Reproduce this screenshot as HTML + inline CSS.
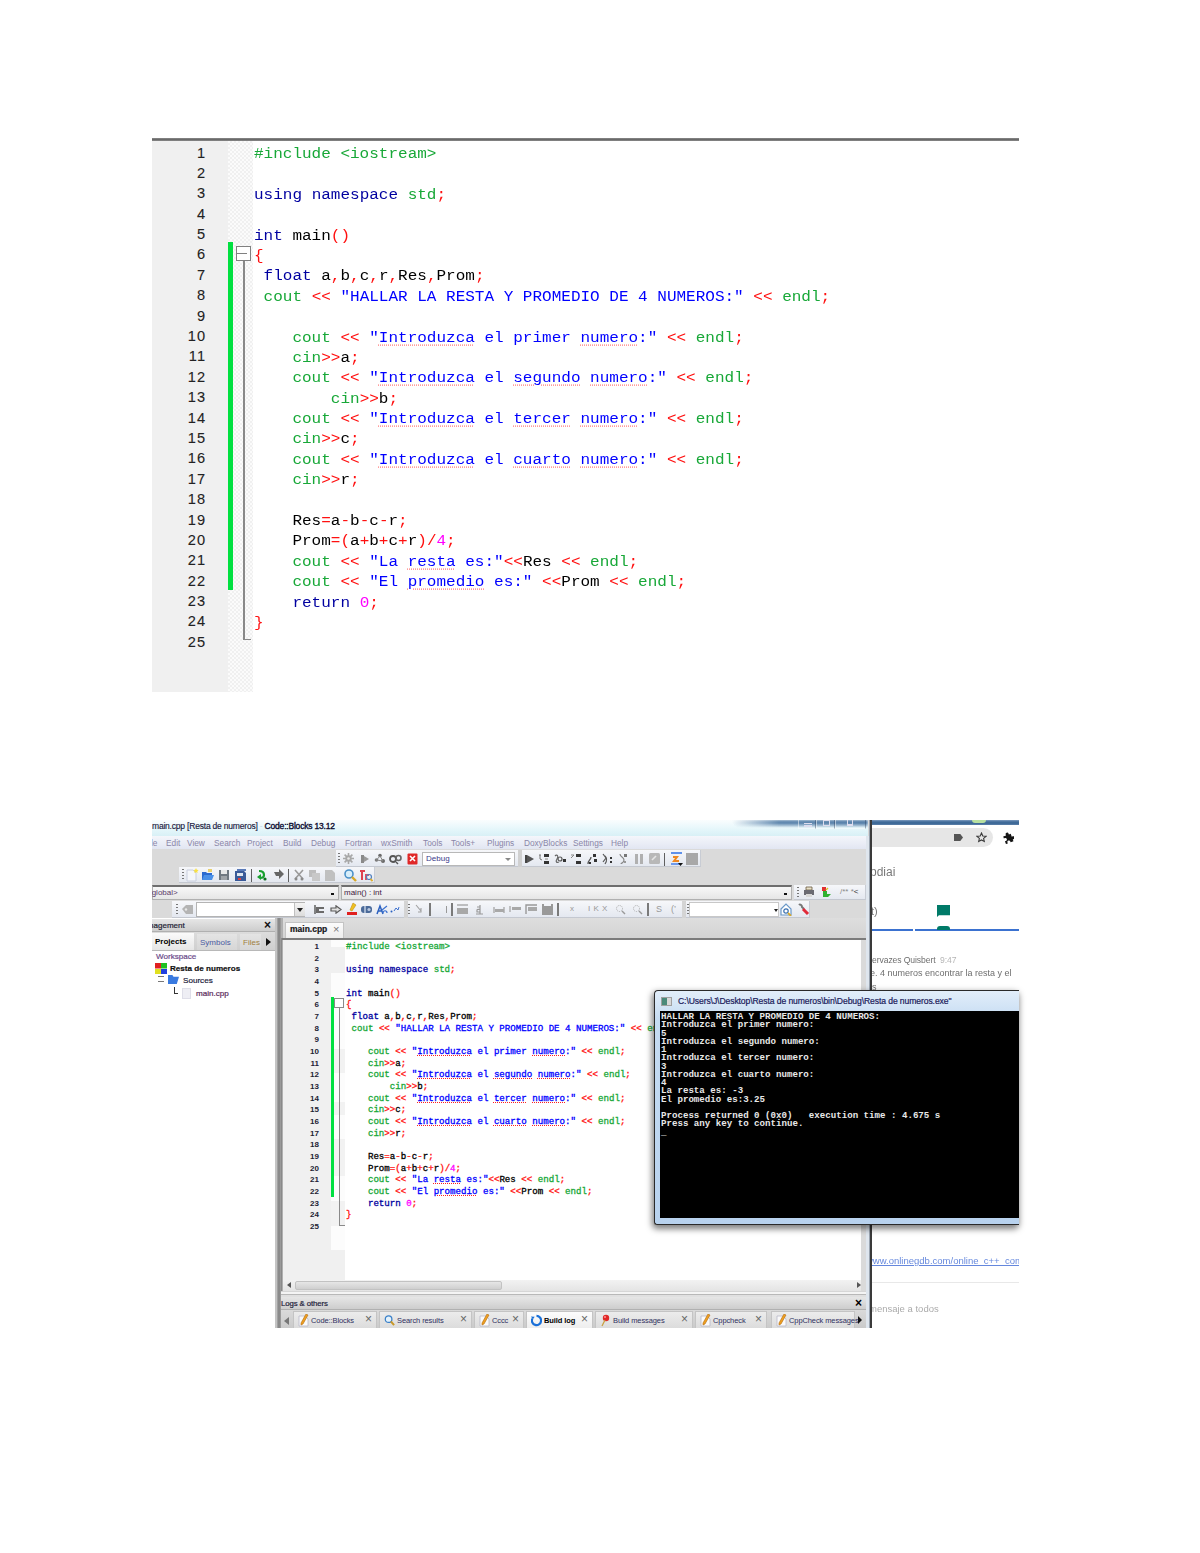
<!DOCTYPE html>
<html><head><meta charset="utf-8">
<style>
*{margin:0;padding:0;box-sizing:border-box}
html,body{width:1200px;height:1553px;background:#fff;overflow:hidden}
body{position:relative;font-family:"Liberation Sans",sans-serif}
.a{position:absolute}
i,em,b{font-style:normal}
/* ===== screenshot 1 ===== */
#s1top{left:152px;top:138px;width:867px;height:3px;background:linear-gradient(#8a8a8a,#6a6a6a 50%,#8a8a8a)}
#s1gut{left:152px;top:141px;width:76px;height:551px;background:#f0f0f0}
#s1mar{left:228px;top:141px;width:25px;height:551px;background-color:#fbfbfb;
 background-image:linear-gradient(45deg,#f0f0f0 25%,transparent 25%,transparent 75%,#f0f0f0 75%),linear-gradient(45deg,#f0f0f0 25%,transparent 25%,transparent 75%,#f0f0f0 75%);
 background-size:4px 4px;background-position:0 0,2px 2px}
#s1green{left:228px;top:242px;width:5px;height:348px;background:#00e040}
#s1fold{left:236px;top:246px;width:15px;height:15px;border:1.5px solid #808080;background:#fff}
#s1fold:after{content:"";position:absolute;left:0;top:5.5px;width:10px;height:1.5px;background:#808080}
#s1fl{left:243px;top:261px;width:1.5px;height:379px;background:#888}
#s1ft{left:243px;top:638.5px;width:8px;height:1.5px;background:#888}
.ln1{position:absolute;margin-top:-1.5px;left:152px;width:54px;text-align:right;font:14.6px/20px "Liberation Sans",sans-serif;letter-spacing:1px;color:#222;-webkit-text-stroke:.1px #222}
.c1{position:absolute;left:254px;font:16px/20px "Liberation Mono",monospace;white-space:pre;color:#000;transform:scaleY(.87);transform-origin:0 14.25px}
.g{color:#18a838}.k{color:#0000a0}.s{color:#0000ff}.o{color:#ff1010}.n{color:#ff00ff}
.c1 .sp{text-decoration:underline dotted #ff4040;text-decoration-thickness:1px;text-underline-offset:3px}
/* ===== screenshot 2 ===== */
#w2{left:152px;top:820px;width:718px;height:508px;background:#d9d9d9;overflow:hidden}
#ttl{left:0;top:0;width:716px;height:16px;background:linear-gradient(#fafdfe,#e4f6fa 60%,#d8f0f6)}
#ttlhaze{left:580px;top:0;width:136px;height:8px;background:linear-gradient(90deg,rgba(50,100,150,0),rgba(50,100,150,.75) 35%,rgba(50,100,150,.8));-webkit-mask-image:linear-gradient(#000 40%,transparent);border-radius:0 0 0 8px;filter:blur(.8px)}
.ttxt{font:8.5px/14px "Liberation Sans",sans-serif;color:#101030;white-space:nowrap;letter-spacing:-.2px;-webkit-text-stroke:.2px #101030}
.capb{top:0;height:9px;border-left:1px solid rgba(255,255,255,.5);border-right:1px solid rgba(40,60,90,.4);border-bottom:1px solid rgba(255,255,255,.4)}
.capb i{position:absolute;background:#445}
#menu{left:0;top:16px;width:714px;height:13px;background:linear-gradient(#f4f6fb,#e2e6f2)}
.mtxt{top:17px;font:8.3px/13px "Liberation Sans",sans-serif;color:#8a86a8;white-space:nowrap}
#dock{left:0;top:29px;width:714px;height:69px;background:#dadada}
.tb{background:linear-gradient(#f6f7fa,#e4e8f0);border-bottom:1px solid #c4c8d0;border-right:1px solid #c8ccd4}
.grip{width:2px;background:repeating-linear-gradient(#777 0 1px,transparent 1px 3px)}
.ic{width:10px;height:10px}
.ic2{top:35px;width:10px;height:10px;background:linear-gradient(90deg,#555 0 2px,transparent 2px 4px,#888 4px 6px,transparent 6px),linear-gradient(#666 0 3px,transparent 3px 6px,#666 6px 8px,transparent 8px);background-size:5px 10px,10px 10px;background-position:0 0,5px 0;background-repeat:no-repeat;opacity:.5}
.combo{background:#fff;border:1px solid #b8b8b8}
.combo span{position:absolute;left:3px;top:0;font:8px/12px "Liberation Sans",sans-serif;color:#223}
.combo b{position:absolute;right:3px;top:5px;width:0;height:0;border-left:3px solid transparent;border-right:3px solid transparent;border-top:3px solid #888}
.combo2{background:linear-gradient(#f8f8f8,#e6e6e6);border:1px solid #b0b0b0;border-top:2px solid #6e6e6e}
.combo2 span{position:absolute;left:2px;top:0;font:8px/12px "Liberation Sans",sans-serif;color:#402040}
.combo2 b{position:absolute;right:4px;top:6px;width:3px;height:2px;background:#111}
.tiny{font:8px/12px "Liberation Sans",sans-serif;color:#777;white-space:nowrap}
#mgmt{left:0;top:98px;width:123px;height:410px;background:#fff}
.phdr{background:linear-gradient(#e6e6e6,#cdcdcd);border-bottom:1px solid #b0b0b0}
.ptxt{font:8.5px/11px "Liberation Sans",sans-serif;color:#223;white-space:nowrap;-webkit-text-stroke:.2px #223}
.xx{font:bold 12px/12px "Liberation Sans",sans-serif;color:#111}
.ptab span{position:absolute;left:3px;top:2px;font:8px/13px "Liberation Sans",sans-serif;white-space:nowrap}
.tree{font:8.1px/12px "Liberation Sans",sans-serif;white-space:nowrap;-webkit-text-stroke:.2px currentColor}
.ltab{top:491px;height:17px;background:linear-gradient(#ececec,#dcdcdc);border:1px solid #c4c4c4;border-bottom:none}
.ltab i,.ltab .ti{position:absolute;left:4px;top:2px;width:11px;height:13px}
.ltab span{position:absolute;left:17px;top:2px;font:7.5px/13px "Liberation Sans",sans-serif;color:#303060;white-space:nowrap;letter-spacing:-.1px}
.ltab em{position:absolute;right:4px;top:1px;font:12px/13px "Liberation Sans",sans-serif;color:#666}
.ln2{position:absolute;left:283px;width:36px;text-align:right;font:bold 8px/11.67px "Liberation Sans",sans-serif;color:#223}
.c2{position:absolute;left:346px;font:9.15px/11.67px "Liberation Mono",monospace;white-space:pre;color:#000;-webkit-text-stroke:.3px currentColor}
.c2 .sp{text-decoration:underline dotted #ff2020;text-decoration-thickness:1px;text-underline-offset:1px}
/* browser */
#brw{left:872px;top:820px;width:147px;height:508px;background:#fff;overflow:hidden}
.btxt{font-family:"Liberation Sans",sans-serif;white-space:nowrap;line-height:14px;opacity:.72}
/* console */
#conshadow{left:654px;top:990px;width:365px;height:235px;box-shadow:-1px 3px 6px 1px rgba(0,0,0,.5);border-radius:4px}
#cons{left:654px;top:990px;width:365px;height:235px;background:linear-gradient(#e2eefa,#c6dcf2 12%,#b8d2ee);border:1px solid #2a2a2a;border-right:none;border-radius:4px 0 0 3px;overflow:hidden}
.con{position:absolute;left:661px;font:bold 9.13px/8.25px "Liberation Mono",monospace;white-space:pre;color:#e8e8e8}

</style></head><body>
<!-- ============ SCREENSHOT 1 ============ -->
<div class="a" id="s1top"></div>
<div class="a" id="s1gut"></div>
<div class="a" id="s1mar"></div>
<div class="a" id="s1green"></div>
<div class="a" id="s1fl"></div>
<div class="a" id="s1ft"></div>
<div class="a" id="s1fold"></div>
<div class="ln1" style="top:144.00px">1</div>
<div class="ln1" style="top:164.39px">2</div>
<div class="ln1" style="top:184.78px">3</div>
<div class="ln1" style="top:205.17px">4</div>
<div class="ln1" style="top:225.56px">5</div>
<div class="ln1" style="top:245.95px">6</div>
<div class="ln1" style="top:266.34px">7</div>
<div class="ln1" style="top:286.73px">8</div>
<div class="ln1" style="top:307.12px">9</div>
<div class="ln1" style="top:327.51px">10</div>
<div class="ln1" style="top:347.90px">11</div>
<div class="ln1" style="top:368.29px">12</div>
<div class="ln1" style="top:388.68px">13</div>
<div class="ln1" style="top:409.07px">14</div>
<div class="ln1" style="top:429.46px">15</div>
<div class="ln1" style="top:449.85px">16</div>
<div class="ln1" style="top:470.24px">17</div>
<div class="ln1" style="top:490.63px">18</div>
<div class="ln1" style="top:511.02px">19</div>
<div class="ln1" style="top:531.41px">20</div>
<div class="ln1" style="top:551.80px">21</div>
<div class="ln1" style="top:572.19px">22</div>
<div class="ln1" style="top:592.58px">23</div>
<div class="ln1" style="top:612.97px">24</div>
<div class="ln1" style="top:633.36px">25</div>
<div class="c1" style="top:144.00px"><span class="g">#include &lt;iostream&gt;</span></div>
<div class="c1" style="top:184.78px"><span class="k">using</span> <span class="k">namespace</span> <span class="g">std</span><span class="o">;</span></div>
<div class="c1" style="top:225.56px"><span class="k">int</span> main<span class="o">()</span></div>
<div class="c1" style="top:245.95px"><span class="o">{</span></div>
<div class="c1" style="top:266.34px"> <span class="k">float</span> a<span class="o">,</span>b<span class="o">,</span>c<span class="o">,</span>r<span class="o">,</span>Res<span class="o">,</span>Prom<span class="o">;</span></div>
<div class="c1" style="top:286.73px"> <span class="g">cout</span> <span class="o">&lt;&lt;</span> <span class="s">&quot;HALLAR LA RESTA Y PROMEDIO DE 4 NUMEROS:&quot;</span> <span class="o">&lt;&lt;</span> <span class="g">endl</span><span class="o">;</span></div>
<div class="c1" style="top:327.51px">    <span class="g">cout</span> <span class="o">&lt;&lt;</span> <span class="s">&quot;</span><span class="s sp">Introduzca</span><span class="s"> el primer </span><span class="s sp">numero</span><span class="s">:&quot;</span> <span class="o">&lt;&lt;</span> <span class="g">endl</span><span class="o">;</span></div>
<div class="c1" style="top:347.90px">    <span class="g">cin</span><span class="o">&gt;&gt;</span>a<span class="o">;</span></div>
<div class="c1" style="top:368.29px">    <span class="g">cout</span> <span class="o">&lt;&lt;</span> <span class="s">&quot;</span><span class="s sp">Introduzca</span><span class="s"> el </span><span class="s sp">segundo</span><span class="s"> </span><span class="s sp">numero</span><span class="s">:&quot;</span> <span class="o">&lt;&lt;</span> <span class="g">endl</span><span class="o">;</span></div>
<div class="c1" style="top:388.68px">        <span class="g">cin</span><span class="o">&gt;&gt;</span>b<span class="o">;</span></div>
<div class="c1" style="top:409.07px">    <span class="g">cout</span> <span class="o">&lt;&lt;</span> <span class="s">&quot;</span><span class="s sp">Introduzca</span><span class="s"> el </span><span class="s sp">tercer</span><span class="s"> </span><span class="s sp">numero</span><span class="s">:&quot;</span> <span class="o">&lt;&lt;</span> <span class="g">endl</span><span class="o">;</span></div>
<div class="c1" style="top:429.46px">    <span class="g">cin</span><span class="o">&gt;&gt;</span>c<span class="o">;</span></div>
<div class="c1" style="top:449.85px">    <span class="g">cout</span> <span class="o">&lt;&lt;</span> <span class="s">&quot;</span><span class="s sp">Introduzca</span><span class="s"> el </span><span class="s sp">cuarto</span><span class="s"> </span><span class="s sp">numero</span><span class="s">:&quot;</span> <span class="o">&lt;&lt;</span> <span class="g">endl</span><span class="o">;</span></div>
<div class="c1" style="top:470.24px">    <span class="g">cin</span><span class="o">&gt;&gt;</span>r<span class="o">;</span></div>
<div class="c1" style="top:511.02px">    Res<span class="o">=</span>a<span class="o">-</span>b<span class="o">-</span>c<span class="o">-</span>r<span class="o">;</span></div>
<div class="c1" style="top:531.41px">    Prom<span class="o">=(</span>a<span class="o">+</span>b<span class="o">+</span>c<span class="o">+</span>r<span class="o">)/</span><span class="n">4</span><span class="o">;</span></div>
<div class="c1" style="top:551.80px">    <span class="g">cout</span> <span class="o">&lt;&lt;</span> <span class="s">&quot;La </span><span class="s sp">resta</span><span class="s"> es:&quot;</span><span class="o">&lt;&lt;</span>Res <span class="o">&lt;&lt;</span> <span class="g">endl</span><span class="o">;</span></div>
<div class="c1" style="top:572.19px">    <span class="g">cout</span> <span class="o">&lt;&lt;</span> <span class="s">&quot;El </span><span class="s sp">promedio</span><span class="s"> es:&quot;</span> <span class="o">&lt;&lt;</span>Prom <span class="o">&lt;&lt;</span> <span class="g">endl</span><span class="o">;</span></div>
<div class="c1" style="top:592.58px">    <span class="k">return</span> <span class="n">0</span><span class="o">;</span></div>
<div class="c1" style="top:612.97px"><span class="o">}</span></div>

<!-- ============ SCREENSHOT 2 : CODE::BLOCKS ============ -->
<div class="a" id="w2">
  <!-- title bar -->
  <div class="a" id="ttl"></div>
  <div class="a" id="ttlhaze"></div>
  <div class="a ttxt" style="left:0;top:-1px"><span style="color:#1a1a40;-webkit-text-stroke:.15px #1a1a40">main.cpp [Resta de numeros]</span><span style="color:#c8d8e8;-webkit-text-stroke:0"> - </span><span style="-webkit-text-stroke:.35px #0a0a30">Code::Blocks 13.12</span></div>
  <div class="a capb" style="left:646px;width:18px"><i style="left:5px;top:3px;width:8px;height:4px;background:transparent;border-top:1px solid #dde;border-bottom:2px solid #dde"></i></div>
  <div class="a capb" style="left:664px;width:19px"><i style="left:6px;top:0px;width:7px;height:6px;border:1.5px solid #dde;background:transparent"></i></div>
  <div class="a capb" style="left:683px;width:31px"><i style="left:11px;top:0px;width:6px;height:6px;background:transparent;border-bottom:2px solid #dde;border-left:1.5px solid #dde;border-right:1.5px solid #dde"></i></div>
  <!-- menu bar -->
  <div class="a" id="menu"></div>
  <div class="a mtxt" style="left:-8px">File</div>
  <div class="a mtxt" style="left:14px">Edit</div>
  <div class="a mtxt" style="left:35px">View</div>
  <div class="a mtxt" style="left:62px">Search</div>
  <div class="a mtxt" style="left:95px">Project</div>
  <div class="a mtxt" style="left:131px">Build</div>
  <div class="a mtxt" style="left:159px">Debug</div>
  <div class="a mtxt" style="left:193px">Fortran</div>
  <div class="a mtxt" style="left:229px">wxSmith</div>
  <div class="a mtxt" style="left:271px">Tools</div>
  <div class="a mtxt" style="left:299px">Tools+</div>
  <div class="a mtxt" style="left:335px">Plugins</div>
  <div class="a mtxt" style="left:372px">DoxyBlocks</div>
  <div class="a mtxt" style="left:421px">Settings</div>
  <div class="a mtxt" style="left:459px">Help</div>
  <div class="a" style="left:714px;top:16px;width:1px;height:492px;background:#8a8a8a"></div>
  <!-- toolbar dock -->
  <div class="a" id="dock"></div>
  <!-- TB1 -->
  <div class="a tb" style="left:184px;top:30px;width:365px;height:17px"></div>
  <div class="a grip" style="left:186px;top:33px;height:12px"></div>
  <svg class="a" style="left:191px;top:33px" width="11" height="11" viewBox="0 0 11 11"><circle cx="5.5" cy="5.5" r="3.2" fill="#a8a8a8"/><path d="M5.5 0v11M0 5.5h11M1.6 1.6l7.8 7.8M9.4 1.6l-7.8 7.8" stroke="#a8a8a8" stroke-width="1.6"/><circle cx="5.5" cy="5.5" r="1.3" fill="#e8e8e8"/></svg>
  <svg class="a" style="left:208px;top:34px" width="10" height="10" viewBox="0 0 10 10"><path d="M1 1h3v8H1z" fill="#8a8a8a"/><path d="M4 2l5 3-5 3z" fill="#9a9a9a"/></svg>
  <svg class="a" style="left:222px;top:33px" width="12" height="12" viewBox="0 0 12 12"><circle cx="6" cy="2.5" r="1.8" fill="#6a6a6a"/><circle cx="2.5" cy="7" r="1.8" fill="#7a7a7a"/><circle cx="9" cy="8" r="2" fill="#6a6a6a"/><path d="M6 3L2.5 7 9 8z" fill="none" stroke="#888" stroke-width="1"/></svg>
  <svg class="a" style="left:237px;top:33px" width="13" height="12" viewBox="0 0 13 12"><circle cx="4" cy="6" r="3" fill="none" stroke="#555" stroke-width="1.8"/><circle cx="9.5" cy="5" r="2.5" fill="none" stroke="#666" stroke-width="1.6"/><path d="M7 9l2 2" stroke="#555" stroke-width="1.5"/></svg>
  <svg class="a" style="left:255px;top:33px" width="11" height="12" viewBox="0 0 11 12"><rect x="0.5" y="0.5" width="10" height="11" rx="1" fill="#e02828"/><path d="M3 3l5 5M8 3L3 8" stroke="#fff" stroke-width="1.6"/></svg>
  <div class="a combo" style="left:270px;top:32px;width:93px;height:14px"><span style="color:#3a3a8a">Debug</span><b></b></div>
  <div class="a" style="left:366px;top:30px;width:5px;height:17px;background:#d0d0d0"></div>
  <div class="a tb" style="left:370px;top:30px;width:179px;height:17px"></div>
  <svg class="a" style="left:373px;top:34px" width="9" height="10" viewBox="0 0 9 10"><path d="M0 1h2v8H0z" fill="#444"/><path d="M2 1l7 4-7 4z" fill="#555"/></svg>
  <svg class="a" style="left:386px;top:33px" width="12" height="12" viewBox="0 0 12 12"><path d="M1 2h2M2 2v4M2 6l2 1" stroke="#777" stroke-width="1"/><path d="M6 1h5v3H6zM6 8h5v3H6z" fill="#333"/><path d="M7 5h3v2H7z" fill="#bbb"/></svg>
  <svg class="a" style="left:402px;top:33px" width="12" height="12" viewBox="0 0 12 12"><path d="M1 3c2-2 4 0 2 3s0 4 2 3" fill="none" stroke="#666" stroke-width="1.2"/><circle cx="6" cy="6" r="2" fill="none" stroke="#555" stroke-width="1.2"/><path d="M9 6h3v3H9z" fill="#333"/></svg>
  <svg class="a" style="left:418px;top:33px" width="12" height="12" viewBox="0 0 12 12"><path d="M1 5l3-3M1 2h3" stroke="#888" stroke-width="1"/><path d="M6 1h5v3H6zM6 8h5v3H6z" fill="#333"/></svg>
  <svg class="a" style="left:434px;top:33px" width="12" height="12" viewBox="0 0 12 12"><path d="M2 11c0-4 3-4 3-7" fill="none" stroke="#555" stroke-width="1.3"/><path d="M7 1h3v3H7zM8 6h3v3H8z" fill="#333"/><path d="M3 9h2v2H3z" fill="#333"/></svg>
  <svg class="a" style="left:449px;top:33px" width="12" height="12" viewBox="0 0 12 12"><path d="M2 1l3 4-3 4M4 3c2 2 2 5 0 8" fill="none" stroke="#555" stroke-width="1.2"/><path d="M9 4h2v2H9zM9 8h2v2H9z" fill="#333"/></svg>
  <svg class="a" style="left:466px;top:33px" width="10" height="12" viewBox="0 0 10 12"><path d="M2 1c0 3 4 3 4 6s-3 3-3 4" fill="none" stroke="#888" stroke-width="1.2"/><path d="M6 1h3v3H6z" fill="#777"/><path d="M6 8h2v2H6z" fill="#999"/></svg>
  <svg class="a" style="left:483px;top:34px" width="8" height="10" viewBox="0 0 8 10"><path d="M0 0h3v10H0zM5 0h3v10H5z" fill="#b0b0b0"/></svg>
  <svg class="a" style="left:497px;top:33px" width="11" height="11" viewBox="0 0 11 11"><rect x="0" y="0" width="11" height="11" rx="1.5" fill="#b8b8b8"/><path d="M3 7l4-4" stroke="#e6e6e6" stroke-width="1.6"/></svg>
  <div class="a" style="left:512px;top:33px;width:1px;height:13px;background:#606060"></div>
  <svg class="a" style="left:518px;top:32px" width="13" height="14" viewBox="0 0 13 14"><path d="M1 1h11" stroke="#3a78e8" stroke-width="1.6"/><path d="M3 5l4 0-3 4h5" fill="none" stroke="#f08820" stroke-width="2"/><path d="M1 12h9" stroke="#3a78e8" stroke-width="1.4"/><path d="M8 11h5l-2.5 3z" fill="#111"/></svg>
  <div class="a" style="left:534px;top:33px;width:12px;height:12px;background:#a8a8a8"></div>
  <!-- TB2 -->
  <div class="a tb" style="left:27px;top:47px;width:196px;height:16px"></div>
  <div class="a grip" style="left:30px;top:49px;height:12px"></div>
  <svg class="a" style="left:33px;top:48px" width="14" height="14" viewBox="0 0 14 14"><path d="M2 2h6l3 3v8H2z" fill="#f4f6fa" stroke="#c8cede" stroke-width="1"/><path d="M11 0l.8 1.8 1.8.3-1.3 1.2.3 1.8-1.6-.9-1.6.9.3-1.8-1.3-1.2 1.8-.3z" fill="#f8e040"/></svg>
  <svg class="a" style="left:49px;top:48px" width="14" height="14" viewBox="0 0 14 14"><path d="M1 4h4l1 1h5v7H1z" fill="#2a6ad0"/><path d="M3 7h10l-2 5H1z" fill="#4a90e8"/><path d="M7 1h4v3H7z" fill="#e8d070"/></svg>
  <svg class="a" style="left:66px;top:49px" width="12" height="12" viewBox="0 0 12 12"><path d="M1 1h10v10H1z" fill="#707880"/><path d="M3 1h6v4H3z" fill="#e8e8e8"/><path d="M3 7h6v4H3z" fill="#a0a4a8"/></svg>
  <svg class="a" style="left:81px;top:48px" width="14" height="14" viewBox="0 0 14 14"><path d="M2 3h9l2 2v8H2z" fill="#3a5a98"/><path d="M4 1h9v2H4z" fill="#5a7ab8"/><path d="M4 5h6v3H4z" fill="#dfe6f0"/><path d="M5 10h3v2H5z" fill="#e04040"/></svg>
  <div class="a" style="left:99px;top:49px;width:1px;height:13px;background:#606060"></div>
  <svg class="a" style="left:104px;top:49px" width="12" height="12" viewBox="0 0 12 12"><path d="M3 2c3 0 5 1 5 4s-2 3-4 3" fill="none" stroke="#18a030" stroke-width="2.2"/><path d="M1 8l4-3v6z" fill="#18a030"/><circle cx="9" cy="10" r="1.6" fill="#107020"/></svg>
  <svg class="a" style="left:120px;top:49px" width="12" height="12" viewBox="0 0 12 12"><path d="M2 3h5V0l5 5-5 5V7H4z" fill="#666"/></svg>
  <div class="a" style="left:136px;top:49px;width:1px;height:13px;background:#606060"></div>
  <svg class="a" style="left:141px;top:49px" width="12" height="12" viewBox="0 0 12 12"><path d="M2 1l8 9M10 1L2 10" stroke="#9a9a9a" stroke-width="1.6"/><circle cx="3" cy="10" r="1.5" fill="#8a8a8a"/><circle cx="9" cy="10" r="1.5" fill="#8a8a8a"/></svg>
  <svg class="a" style="left:156px;top:49px" width="13" height="12" viewBox="0 0 13 12"><path d="M1 1h7v7H1z" fill="#bdbdbd"/><path d="M4 4h8v8H4z" fill="#c8c8c8"/></svg>
  <svg class="a" style="left:172px;top:49px" width="12" height="12" viewBox="0 0 12 12"><path d="M1 1h7l3 3v8H1z" fill="#c0c0c0"/></svg>
  <svg class="a" style="left:191px;top:48px" width="14" height="14" viewBox="0 0 14 14"><circle cx="6" cy="6" r="4" fill="#d8eefa" stroke="#4a90c8" stroke-width="1.6"/><path d="M9 9l4 4" stroke="#d8a828" stroke-width="2.4"/></svg>
  <svg class="a" style="left:207px;top:48px" width="14" height="14" viewBox="0 0 14 14"><path d="M1 2h5v2H4v8H2V4H1z" fill="#e04050"/><path d="M6 6h4v2H8v4H6z" fill="#e05060"/><circle cx="10" cy="9" r="2.5" fill="none" stroke="#5080c0" stroke-width="1.2"/><path d="M11.5 11l2 2" stroke="#e0b030" stroke-width="1.8"/></svg>
  <!-- row 3 combos -->
  <div class="a combo2" style="left:0;top:65px;width:187px;height:15px"><span style="left:-6px;color:#5a3a6a">&lt;global&gt;</span><b></b></div>
  <div class="a combo2" style="left:189px;top:65px;width:451px;height:15px"><span>main() : int</span><b></b></div>
  <div class="a tb" style="left:642px;top:65px;width:72px;height:15px"></div>
  <div class="a grip" style="left:645px;top:67px;height:11px"></div>
  <svg class="a" style="left:651px;top:66px" width="12" height="12" viewBox="0 0 12 12"><path d="M3 1h6v3H3z" fill="#e8e0c8" stroke="#6a5a40" stroke-width=".8"/><path d="M1 4h10v5H1z" fill="#6a6a72"/><path d="M3 8h6v3H3z" fill="#d8d8d8"/></svg>
  <svg class="a" style="left:668px;top:66px" width="12" height="12" viewBox="0 0 12 12"><path d="M2 1h4v4H2z" fill="#e03030"/><path d="M3 5h4v3h4l-3 3H3z" fill="#30b030"/><path d="M6 4l2-2" stroke="#e0c020" stroke-width="1.2"/></svg>
  <div class="a tiny" style="left:688px;top:66px;color:#888">/** *<span style="color:#333">&lt;</span></div>
  <!-- TB4 -->
  <div class="a tb" style="left:20px;top:81px;width:638px;height:17px"></div>
  <div class="a grip" style="left:24px;top:84px;height:12px"></div>
  <svg class="a" style="left:30px;top:84px" width="12" height="11" viewBox="0 0 12 11"><path d="M0 5l4-4h7v9H4z" fill="#b4b4b4"/><circle cx="4" cy="5.5" r="1.2" fill="#e8e8e8"/></svg>
  <div class="a" style="left:44px;top:82px;width:109px;height:15px;background:#fff;border:1px solid #b4b4b4"></div>
  <div class="a" style="left:142px;top:83px;width:11px;height:13px;background:linear-gradient(#f4f4f4,#dcdcdc);border-left:1px solid #c0c0c0"></div>
  <div class="a" style="left:145px;top:88px;width:0;height:0;border-left:3px solid transparent;border-right:3px solid transparent;border-top:4px solid #222"></div>
  <svg class="a" style="left:162px;top:84px" width="11" height="11" viewBox="0 0 11 11"><path d="M1 1v9" stroke="#555" stroke-width="1.4"/><path d="M2 3h8v2H5v2h5v2H2z" fill="#6a6a6a"/></svg>
  <svg class="a" style="left:178px;top:85px" width="12" height="9" viewBox="0 0 12 9"><path d="M1 3h5V0.8L11 4.5 6 8.2V6H1z" fill="#e0e0e0" stroke="#5a5a5a" stroke-width="1.2"/></svg>
  <svg class="a" style="left:194px;top:82px" width="12" height="14" viewBox="0 0 12 14"><path d="M7 1l3 2-4 6-2-1z" fill="#f0c020" stroke="#c09010" stroke-width=".6"/><path d="M1 10h10v3H1z" fill="#e02020"/></svg>
  <svg class="a" style="left:208px;top:84px" width="13" height="11" viewBox="0 0 13 11"><rect x="1" y="2" width="11" height="7" rx="3" fill="#4a6a9a"/><path d="M5 2v7" stroke="#dfe8f4" stroke-width="1.2"/><circle cx="9" cy="5.5" r="1.6" fill="#b8c8e0"/></svg>
  <svg class="a" style="left:224px;top:84px" width="12" height="11" viewBox="0 0 12 11"><path d="M1 10L4 2l3 8M2.2 7h3.6" fill="none" stroke="#2a60c0" stroke-width="1.5"/><path d="M7 9c0-3 4-3 4 0M6 6l5-4" fill="none" stroke="#3a70d0" stroke-width="1.2"/></svg>
  <svg class="a" style="left:238px;top:85px" width="10" height="8" viewBox="0 0 10 8"><circle cx="1.5" cy="6.5" r="1" fill="#2a60c0"/><path d="M4 6l2-3 2 2 1-3" fill="none" stroke="#3a70d0" stroke-width="1"/></svg>
  <div class="a" style="left:252px;top:81px;width:4px;height:17px;background:#d4d4d4"></div>
  <div class="a grip" style="left:256px;top:84px;height:12px"></div>
  <svg class="a" style="left:263px;top:84px" width="8" height="11" viewBox="0 0 8 11"><path d="M1 1l5 6M6 4v4H3" fill="none" stroke="#a0a0a0" stroke-width="1.1"/></svg>
  <div class="a" style="left:277px;top:83px;width:1.5px;height:13px;background:#7a7a7a"></div>
  <div class="a" style="left:294px;top:86px;width:1px;height:7px;background:#999"></div>
  <div class="a" style="left:299px;top:83px;width:1.5px;height:13px;background:#7a7a7a"></div>
  <svg class="a" style="left:305px;top:84px" width="11" height="11" viewBox="0 0 11 11"><path d="M0 1h11" stroke="#999" stroke-width="1.2"/><path d="M0 4h11v6H0z" fill="#a8a8a8"/></svg>
  <svg class="a" style="left:322px;top:84px" width="9" height="11" viewBox="0 0 9 11"><path d="M2 10h7M6 1v9M3 3h3M3 6c0-1 3-1 3 0v2H3z" fill="none" stroke="#999" stroke-width="1.2"/></svg>
  <svg class="a" style="left:341px;top:85px" width="12" height="9" viewBox="0 0 12 9"><path d="M1 2v6M11 2v6" stroke="#a0a0a0" stroke-width="1.2"/><path d="M2 4h9v3H2z" fill="#a8a8a8"/></svg>
  <svg class="a" style="left:357px;top:85px" width="12" height="9" viewBox="0 0 12 9"><path d="M1 1v6" stroke="#a0a0a0" stroke-width="1.2"/><path d="M3 2h9v3H3z" fill="#a8a8a8"/></svg>
  <svg class="a" style="left:373px;top:84px" width="12" height="11" viewBox="0 0 12 11"><path d="M1 10V1h11" fill="none" stroke="#999" stroke-width="1.4"/><path d="M3 3h9v4H3z" fill="#a8a8a8"/></svg>
  <svg class="a" style="left:390px;top:84px" width="11" height="11" viewBox="0 0 11 11"><path d="M0 0h2v2h7V0h2v11H0z" fill="#999"/></svg>
  <div class="a" style="left:405px;top:83px;width:1.5px;height:13px;background:#7a7a7a"></div>
  <div class="a tiny" style="left:418px;top:83px;color:#999">x</div>
  <div class="a tiny" style="left:436px;top:83px;color:#999;letter-spacing:.5px">I K X</div>
  <svg class="a" style="left:463px;top:84px" width="11" height="11" viewBox="0 0 11 11"><circle cx="4.5" cy="4.5" r="3" fill="none" stroke="#aaa" stroke-width="1" stroke-dasharray="1 1"/><path d="M7 7l3 3" stroke="#999" stroke-width="1.4"/></svg>
  <svg class="a" style="left:480px;top:84px" width="11" height="11" viewBox="0 0 11 11"><circle cx="4.5" cy="4.5" r="3" fill="none" stroke="#aaa" stroke-width="1" stroke-dasharray="1 1"/><path d="M7 7l3 3" stroke="#999" stroke-width="1.4"/></svg>
  <div class="a" style="left:495px;top:83px;width:1.5px;height:13px;background:#7a7a7a"></div>
  <div class="a tiny" style="left:504px;top:83px;color:#999;font-size:9px">S</div>
  <div class="a tiny" style="left:519px;top:83px;color:#999;font-size:9px">(&#x2019;</div>
  <div class="a" style="left:530px;top:81px;width:4px;height:17px;background:#d4d4d4"></div>
  <div class="a grip" style="left:535px;top:84px;height:12px"></div>
  <div class="a" style="left:537px;top:82px;width:90px;height:15px;background:#fff;border:1px solid #c8c8c8"></div>
  <div class="a" style="left:622px;top:89px;width:0;height:0;border-left:2px solid transparent;border-right:2px solid transparent;border-top:3px solid #222"></div>
  <svg class="a" style="left:628px;top:83px" width="13" height="13" viewBox="0 0 13 13"><path d="M1 6l5-5 5 5v6H1z" fill="#fff" stroke="#6a98c8" stroke-width="1.2"/><circle cx="6" cy="8" r="2.2" fill="none" stroke="#3a70b0" stroke-width="1.2"/><path d="M8 10l3 3" stroke="#d8a828" stroke-width="1.8"/></svg>
  <svg class="a" style="left:645px;top:83px" width="13" height="13" viewBox="0 0 13 13"><path d="M2 2c1-1 3 0 3 2l2 2" fill="none" stroke="#777" stroke-width="2"/><path d="M6 6l5 5" stroke="#e02a3a" stroke-width="3"/></svg>
  <!-- Management panel -->
  <div class="a" id="mgmt"></div>
  <div class="a phdr" style="left:0;top:99px;width:123px;height:13px"></div>
  <div class="a ptxt" style="left:-14px;top:100px;font-size:8px">Management</div>
  <div class="a xx" style="left:112px;top:99px">&#xd7;</div>
  <div class="a" style="left:0;top:112px;width:123px;height:18px;background:linear-gradient(#dcdcdc,#cfcfcf)"></div>
  <div class="a ptab" style="left:0;top:113px;width:42px;height:17px;background:linear-gradient(#fafafa,#e6e6e6)"><span style="color:#000;font-weight:bold">Projects</span></div>
  <div class="a ptab" style="left:45px;top:114px;width:40px;height:16px;background:linear-gradient(#e4e4e4,#d6d6d6)"><span style="color:#4a5aa0">Symbols</span></div>
  <div class="a ptab" style="left:88px;top:114px;width:21px;height:16px;background:linear-gradient(#e4e4e4,#d6d6d6)"><span style="color:#a08040">Files</span></div>
  <div class="a" style="left:114px;top:118px;width:0;height:0;border-top:4px solid transparent;border-bottom:4px solid transparent;border-left:5px solid #111"></div>
  <div class="a" style="left:0;top:130px;width:123px;height:1px;background:#b8b8b8"></div>
  <div class="a tree" style="left:4px;top:131px;color:#6a4a8a">Workspace</div>
  <div class="a" style="left:3px;top:143px;width:12px;height:11px;background:linear-gradient(90deg,#e02020 50%,#20c020 50%) top/100% 50% no-repeat,linear-gradient(90deg,#e0e020 50%,#2040e0 50%) bottom/100% 50% no-repeat"></div>
  <div class="a tree" style="left:18px;top:143px;color:#111;font-weight:bold">Resta de numeros</div>
  <div class="a" style="left:6px;top:156px;width:6px;height:6px;border-top:1px solid #777;border-bottom:1px solid #777"></div>
  <div class="a" style="left:16px;top:155px;width:11px;height:9px;background:#3a7ae0;clip-path:polygon(0 0,40% 0,50% 20%,100% 20%,80% 100%,0 100%)"></div>
  <div class="a tree" style="left:31px;top:155px;color:#1a1a3a">Sources</div>
  <div class="a" style="left:22px;top:167px;width:4px;height:7px;border-left:1px solid #333;border-bottom:1px solid #333"></div>
  <div class="a" style="left:30px;top:168px;width:9px;height:11px;background:#eeeef4;border:1px solid #dedee8"></div>
  <div class="a tree" style="left:44px;top:168px;color:#5a2a5a">main.cpp</div>
  <!-- splitter -->
  <div class="a" style="left:123px;top:98px;width:8px;height:410px;background:linear-gradient(90deg,#c4c4c4 0 2px,#a0a0a0 2px 3px,#8a8a8a 3px 5px,#9a9a9a 5px 6px,#b0b0b0 6px)"></div>
  <!-- editor notebook -->
  <div class="a" style="left:131px;top:98px;width:583px;height:22px;background:linear-gradient(#dedede,#d2d2d2)"></div>
  <div class="a" style="left:133px;top:102px;width:59px;height:18px;background:linear-gradient(#fbfbfb,#ececec);border:1px solid #c4c4c4;border-bottom:none"></div>
  <div class="a ptxt" style="left:138px;top:104px;color:#111;font-weight:bold">main.cpp</div>
  <div class="a xx" style="left:181px;top:103px;color:#777;font-size:11px;font-weight:normal">&#xd7;</div>
  <div class="a" style="left:129px;top:118px;width:585px;height:2px;background:#7c7c7c"></div>
  <div class="a" style="left:129px;top:118px;width:1px;height:357px;background:#8a8a8a"></div>
  <div class="a" style="left:131px;top:120px;width:578px;height:340px;background:#fff"></div>
  <div class="a" style="left:131px;top:120px;width:48px;height:340px;background:#f0f0f0"></div>
  <div class="a" style="left:179px;top:120px;width:14px;height:340px;background:#fcfcfc"></div>
  <div class="a" style="left:179px;top:127px;width:14px;height:26px;background:#f0f0f0"></div>
  <div class="a" style="left:179px;top:229px;width:14px;height:24px;background:#f2f2f2"></div>
  <div class="a" style="left:179px;top:282px;width:14px;height:13px;background:#f2f2f2"></div>
  <div class="a" style="left:179px;top:319px;width:14px;height:37px;background:#f2f2f2"></div>
  <div class="a" style="left:179px;top:381px;width:14px;height:25px;background:#f2f2f2"></div>
  <div class="a" style="left:131px;top:430px;width:62px;height:30px;background:#f0f0f0"></div>
  <div class="a" style="left:179px;top:177px;width:3px;height:200px;background:#00e040"></div>
  <div class="a" style="left:182px;top:178px;width:10px;height:10px;border:1px solid #8a8a8a;background:#fff"></div>
  <div class="a" style="left:186.5px;top:188px;width:1px;height:218px;background:#8a8a8a"></div>
  <div class="a" style="left:186.5px;top:405px;width:6px;height:1px;background:#8a8a8a"></div>
  <!-- scrollbar -->
  <div class="a" style="left:131px;top:460px;width:578px;height:11px;background:linear-gradient(#f2f2f2,#e4e4e4)"></div>
  <div class="a" style="left:143px;top:461px;width:207px;height:9px;background:linear-gradient(#e6e6e6,#cfcfcf);border:1px solid #c2c2c2;border-radius:2px"></div>
  <div class="a" style="left:135px;top:462px;width:0;height:0;border-top:3px solid transparent;border-bottom:3px solid transparent;border-right:4px solid #555"></div>
  <div class="a" style="left:705px;top:462px;width:0;height:0;border-top:3px solid transparent;border-bottom:3px solid transparent;border-left:4px solid #555"></div>
  <div class="a" style="left:709px;top:120px;width:5px;height:355px;background:#dadada"></div>
  <div class="a" style="left:129px;top:471px;width:585px;height:6px;background:linear-gradient(#d6d6d6 0 1px,#f4f4f4 1px 3px,#b8b8b8 3px 4px,#e0e0e0 4px)"></div>
  <!-- logs -->
  <div class="a phdr" style="left:129px;top:477px;width:585px;height:13px"></div>
  <div class="a ptxt" style="left:129px;top:478px;color:#1a1a40;font-size:7.8px;letter-spacing:-.1px">Logs &amp; others</div>
  <div class="a xx" style="left:703px;top:477px;color:#000">&#xd7;</div>
  <div class="a" style="left:129px;top:490px;width:585px;height:18px;background:linear-gradient(#dadada,#cacaca)"></div>
  <div class="a" style="left:123px;top:475px;width:6px;height:33px;background:linear-gradient(90deg,#c4c4c4 0 2px,#a0a0a0 2px 3px,#8a8a8a 3px 5px,#9a9a9a 5px)"></div>
  <div class="a" style="left:132px;top:497px;width:0;height:0;border-top:4px solid transparent;border-bottom:4px solid transparent;border-right:5px solid #777"></div>
  <div class="a ltab" style="left:141px;width:84px"><svg class="ti" width="11" height="13" viewBox="0 0 11 13"><path d="M1 2h6l3 3v7H1z" fill="#fafafa" stroke="#b8b8c8" stroke-width=".8"/><path d="M8 0l2 1-5 9-2 1 0-2z" fill="#f0a020" stroke="#b06a10" stroke-width=".6"/></svg><span>Code::Blocks</span><em>&#xd7;</em></div>
  <div class="a ltab" style="left:227px;width:93px"><svg class="ti" width="12" height="13" viewBox="0 0 12 13"><circle cx="5" cy="5" r="3.6" fill="#e4f2fc" stroke="#3a80c8" stroke-width="1.4"/><path d="M7.5 7.5l3.5 4" stroke="#c89828" stroke-width="2.2"/></svg><span>Search results</span><em>&#xd7;</em></div>
  <div class="a ltab" style="left:322px;width:50px"><svg class="ti" width="11" height="13" viewBox="0 0 11 13"><path d="M1 2h6l3 3v7H1z" fill="#fafafa" stroke="#b8b8c8" stroke-width=".8"/><path d="M8 0l2 1-5 9-2 1 0-2z" fill="#f0a020" stroke="#b06a10" stroke-width=".6"/></svg><span>Cccc</span><em>&#xd7;</em></div>
  <div class="a ltab" style="left:374px;width:67px;background:linear-gradient(#fcfcfc,#eeeeee)"><svg class="ti" width="12" height="13" viewBox="0 0 12 13"><path d="M6 1.5a5 5 0 1 1-4.6 3" fill="none" stroke="#1a70d8" stroke-width="2.4"/><path d="M0 2l4 .5-2 3z" fill="#1a70d8"/></svg><span style="font-weight:bold;color:#000">Build log</span><em>&#xd7;</em></div>
  <div class="a ltab" style="left:443px;width:98px"><svg class="ti" width="11" height="13" viewBox="0 0 11 13"><circle cx="6" cy="4" r="3.2" fill="#e02828"/><path d="M5 6l-3 6" stroke="#c8a040" stroke-width="1.3"/><circle cx="5" cy="3" r="1" fill="#ff9090"/></svg><span>Build messages</span><em>&#xd7;</em></div>
  <div class="a ltab" style="left:543px;width:72px"><svg class="ti" width="11" height="13" viewBox="0 0 11 13"><path d="M1 2h6l3 3v7H1z" fill="#fafafa" stroke="#b8b8c8" stroke-width=".8"/><path d="M8 0l2 1-5 9-2 1 0-2z" fill="#f0a020" stroke="#b06a10" stroke-width=".6"/></svg><span>Cppcheck</span><em>&#xd7;</em></div>
  <div class="a ltab" style="left:619px;width:84px"><svg class="ti" width="11" height="13" viewBox="0 0 11 13"><path d="M1 2h6l3 3v7H1z" fill="#fafafa" stroke="#b8b8c8" stroke-width=".8"/><path d="M8 0l2 1-5 9-2 1 0-2z" fill="#f0a020" stroke="#b06a10" stroke-width=".6"/></svg><span>CppCheck messages</span></div>
  <div class="a" style="left:706px;top:496px;width:0;height:0;border-top:4px solid transparent;border-bottom:4px solid transparent;border-left:4px solid #111"></div>
  <!-- right window frame -->
  <div class="a" style="left:714px;top:16px;width:3px;height:492px;background:#dfe6ee"></div>
  <div class="a" style="left:717px;top:0;width:1px;height:508px;background:#9aa4b0"></div>
</div>
<div class="ln2" style="top:941.00px">1</div>
<div class="ln2" style="top:952.67px">2</div>
<div class="ln2" style="top:964.34px">3</div>
<div class="ln2" style="top:976.01px">4</div>
<div class="ln2" style="top:987.68px">5</div>
<div class="ln2" style="top:999.35px">6</div>
<div class="ln2" style="top:1011.02px">7</div>
<div class="ln2" style="top:1022.69px">8</div>
<div class="ln2" style="top:1034.36px">9</div>
<div class="ln2" style="top:1046.03px">10</div>
<div class="ln2" style="top:1057.70px">11</div>
<div class="ln2" style="top:1069.37px">12</div>
<div class="ln2" style="top:1081.04px">13</div>
<div class="ln2" style="top:1092.71px">14</div>
<div class="ln2" style="top:1104.38px">15</div>
<div class="ln2" style="top:1116.05px">16</div>
<div class="ln2" style="top:1127.72px">17</div>
<div class="ln2" style="top:1139.39px">18</div>
<div class="ln2" style="top:1151.06px">19</div>
<div class="ln2" style="top:1162.73px">20</div>
<div class="ln2" style="top:1174.40px">21</div>
<div class="ln2" style="top:1186.07px">22</div>
<div class="ln2" style="top:1197.74px">23</div>
<div class="ln2" style="top:1209.41px">24</div>
<div class="ln2" style="top:1221.08px">25</div>
<div class="c2" style="top:941.00px"><span class="g">#include &lt;iostream&gt;</span></div>
<div class="c2" style="top:964.34px"><span class="k">using</span> <span class="k">namespace</span> <span class="g">std</span><span class="o">;</span></div>
<div class="c2" style="top:987.68px"><span class="k">int</span> main<span class="o">()</span></div>
<div class="c2" style="top:999.35px"><span class="o">{</span></div>
<div class="c2" style="top:1011.02px"> <span class="k">float</span> a<span class="o">,</span>b<span class="o">,</span>c<span class="o">,</span>r<span class="o">,</span>Res<span class="o">,</span>Prom<span class="o">;</span></div>
<div class="c2" style="top:1022.69px"> <span class="g">cout</span> <span class="o">&lt;&lt;</span> <span class="s">&quot;HALLAR LA RESTA Y PROMEDIO DE 4 NUMEROS:&quot;</span> <span class="o">&lt;&lt;</span> <span class="g">endl</span><span class="o">;</span></div>
<div class="c2" style="top:1046.03px">    <span class="g">cout</span> <span class="o">&lt;&lt;</span> <span class="s">&quot;</span><span class="s sp">Introduzca</span><span class="s"> el primer </span><span class="s sp">numero</span><span class="s">:&quot;</span> <span class="o">&lt;&lt;</span> <span class="g">endl</span><span class="o">;</span></div>
<div class="c2" style="top:1057.70px">    <span class="g">cin</span><span class="o">&gt;&gt;</span>a<span class="o">;</span></div>
<div class="c2" style="top:1069.37px">    <span class="g">cout</span> <span class="o">&lt;&lt;</span> <span class="s">&quot;</span><span class="s sp">Introduzca</span><span class="s"> el </span><span class="s sp">segundo</span><span class="s"> </span><span class="s sp">numero</span><span class="s">:&quot;</span> <span class="o">&lt;&lt;</span> <span class="g">endl</span><span class="o">;</span></div>
<div class="c2" style="top:1081.04px">        <span class="g">cin</span><span class="o">&gt;&gt;</span>b<span class="o">;</span></div>
<div class="c2" style="top:1092.71px">    <span class="g">cout</span> <span class="o">&lt;&lt;</span> <span class="s">&quot;</span><span class="s sp">Introduzca</span><span class="s"> el </span><span class="s sp">tercer</span><span class="s"> </span><span class="s sp">numero</span><span class="s">:&quot;</span> <span class="o">&lt;&lt;</span> <span class="g">endl</span><span class="o">;</span></div>
<div class="c2" style="top:1104.38px">    <span class="g">cin</span><span class="o">&gt;&gt;</span>c<span class="o">;</span></div>
<div class="c2" style="top:1116.05px">    <span class="g">cout</span> <span class="o">&lt;&lt;</span> <span class="s">&quot;</span><span class="s sp">Introduzca</span><span class="s"> el </span><span class="s sp">cuarto</span><span class="s"> </span><span class="s sp">numero</span><span class="s">:&quot;</span> <span class="o">&lt;&lt;</span> <span class="g">endl</span><span class="o">;</span></div>
<div class="c2" style="top:1127.72px">    <span class="g">cin</span><span class="o">&gt;&gt;</span>r<span class="o">;</span></div>
<div class="c2" style="top:1151.06px">    Res<span class="o">=</span>a<span class="o">-</span>b<span class="o">-</span>c<span class="o">-</span>r<span class="o">;</span></div>
<div class="c2" style="top:1162.73px">    Prom<span class="o">=(</span>a<span class="o">+</span>b<span class="o">+</span>c<span class="o">+</span>r<span class="o">)/</span><span class="n">4</span><span class="o">;</span></div>
<div class="c2" style="top:1174.40px">    <span class="g">cout</span> <span class="o">&lt;&lt;</span> <span class="s">&quot;La </span><span class="s sp">resta</span><span class="s"> es:&quot;</span><span class="o">&lt;&lt;</span>Res <span class="o">&lt;&lt;</span> <span class="g">endl</span><span class="o">;</span></div>
<div class="c2" style="top:1186.07px">    <span class="g">cout</span> <span class="o">&lt;&lt;</span> <span class="s">&quot;El </span><span class="s sp">promedio</span><span class="s"> es:&quot;</span> <span class="o">&lt;&lt;</span>Prom <span class="o">&lt;&lt;</span> <span class="g">endl</span><span class="o">;</span></div>
<div class="c2" style="top:1197.74px">    <span class="k">return</span> <span class="n">0</span><span class="o">;</span></div>
<div class="c2" style="top:1209.41px"><span class="o">}</span></div>

<!-- ============ BROWSER ============ -->
<div class="a" style="left:870px;top:820px;width:2px;height:508px;background:#3a3a3a"></div>
<div class="a" id="brw">
  <div class="a" style="left:0;top:0;width:147px;height:5px;background:linear-gradient(#7e9cc0,#3f6a98 40%,#3f6a98 80%,#6a8ab0)"></div>
  <div class="a" style="left:100px;top:0;width:14px;height:3px;background:#b8e0a0;border-radius:0 0 7px 7px"></div>
  <div class="a" style="left:0;top:8px;width:121px;height:19px;background:#e6e6e6;border-radius:0 10px 10px 0"></div>
  <div class="a" style="left:82px;top:14px;width:9px;height:7px;background:#555;clip-path:polygon(0 0,70% 0,100% 50%,70% 100%,0 100%)"></div>
  <svg class="a" style="left:104px;top:12px" width="11" height="11" viewBox="0 0 11 11"><path d="M5.5 1l1.3 3 3.2.3-2.4 2.1.7 3.1-2.8-1.6-2.8 1.6.7-3.1L1 4.3l3.2-.3z" fill="none" stroke="#3a3a3a" stroke-width="1.1"/></svg>
  <svg class="a" style="left:130px;top:12px" width="12" height="12" viewBox="0 0 12 12"><path d="M2 3h3V2a1.5 1.5 0 0 1 3 0v1h2v3h1a1.5 1.5 0 0 1 0 3h-1v2H7v-1a1.5 1.5 0 0 0-3 0v1H2V8h1a1.5 1.5 0 0 0 0-3H2z" fill="#151515" transform="rotate(-20 6 6)"/></svg>
  <div class="a btxt" style="left:-2px;top:45px;font-size:12px;color:#444">pdiai</div>
  <div class="a btxt" style="left:-1px;top:84px;font-size:11px;color:#444">t)</div>
  <div class="a" style="left:65px;top:85px;width:13px;height:12px;background:#007a68;clip-path:polygon(0 0,100% 0,100% 85%,15% 85%,0 100%)"></div>
  <div class="a" style="left:0;top:109px;width:147px;height:2px;background:#3b72d0"></div>
  <div class="a" style="left:41px;top:109px;width:2px;height:2px;background:#fff"></div>
  <div class="a" style="left:65px;top:106px;width:13px;height:4px;background:#007a68;border-radius:3px 3px 0 0"></div>
  <div class="a btxt" style="left:-6px;top:133px;font-size:8.6px;color:#333;letter-spacing:-.1px">Cervazes Quisbert &nbsp;<span style="color:#999">9:47</span></div>
  <div class="a btxt" style="left:-2px;top:146px;font-size:9px;color:#333">e. 4 numeros encontrar la resta y el</div>
  <div class="a btxt" style="left:0px;top:160px;font-size:9px;color:#333">s</div>
  <div class="a btxt" style="left:-6px;top:434px;font-size:9.5px;color:#2a5ad0;text-decoration:underline">www.onlinegdb.com/online_c++_comp</div>
  <div class="a" style="left:0;top:462px;width:147px;height:1px;background:#e8e8e8"></div>
  <div class="a btxt" style="left:-3px;top:482px;font-size:9.5px;color:#8a8a8a">mensaje a todos</div>
</div>

<!-- ============ CONSOLE ============ -->
<div class="a" id="conshadow"></div>
<div class="a" id="cons">
  <div class="a" style="left:6px;top:6px;width:11px;height:9px;background:linear-gradient(90deg,#4a8a7a 0 60%,#d8d8d8 60%);border:1px solid #a0a0a0"></div>
  <div class="a" style="left:23px;top:4px;font:8.6px/12px 'Liberation Sans',sans-serif;color:#1a1a5a;white-space:nowrap;letter-spacing:-.1px;-webkit-text-stroke:.2px #1a1a5a">C:\Users\J\Desktop\Resta de numeros\bin\Debug\Resta de numeros.exe"</div>
  <div class="a" style="left:5px;top:20px;width:400px;height:207px;background:#000"></div>
</div>
<div class="con" style="top:1013.00px">HALLAR LA RESTA Y PROMEDIO DE 4 NUMEROS:</div>
<div class="con" style="top:1021.25px">Introduzca el primer numero:</div>
<div class="con" style="top:1029.50px">5</div>
<div class="con" style="top:1037.75px">Introduzca el segundo numero:</div>
<div class="con" style="top:1046.00px">1</div>
<div class="con" style="top:1054.25px">Introduzca el tercer numero:</div>
<div class="con" style="top:1062.50px">3</div>
<div class="con" style="top:1070.75px">Introduzca el cuarto numero:</div>
<div class="con" style="top:1079.00px">4</div>
<div class="con" style="top:1087.25px">La resta es: -3</div>
<div class="con" style="top:1095.50px">El promedio es:3.25</div>
<div class="con" style="top:1112.00px">Process returned 0 (0x0)   execution time : 4.675 s</div>
<div class="con" style="top:1120.25px">Press any key to continue.</div>
<div class="con" style="top:1128.50px">_</div>

</body></html>
